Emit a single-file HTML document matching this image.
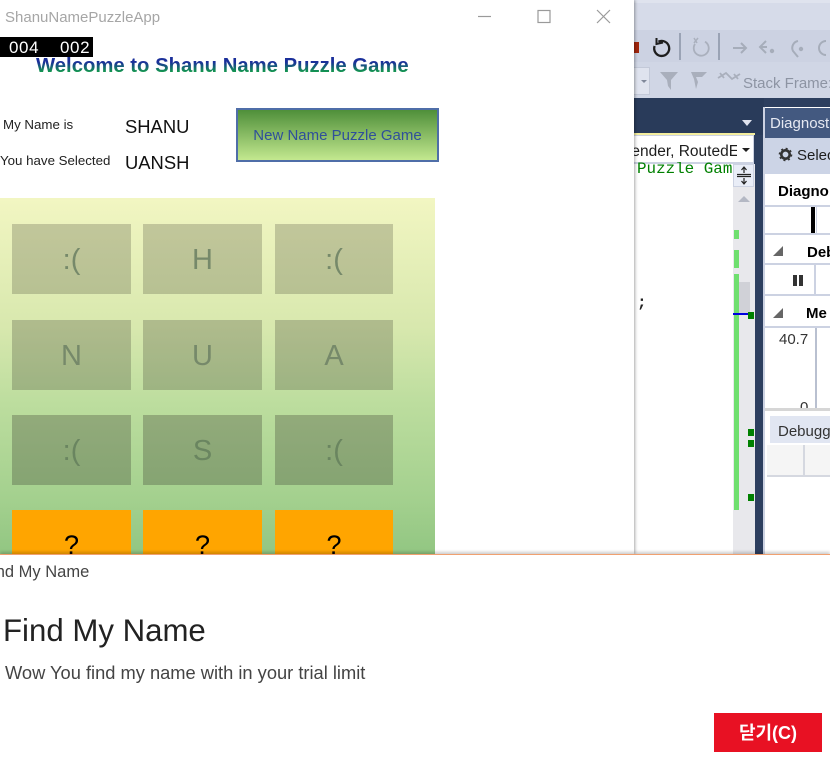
<!DOCTYPE html>
<html><head><meta charset="utf-8">
<style>
html,body{margin:0;padding:0;background:#fff}
#r{position:relative;width:830px;height:768px;overflow:hidden;background:#fff;font-family:"Liberation Sans","Noto Sans CJK KR",sans-serif}
.a{position:absolute}
.t{position:absolute;white-space:nowrap;line-height:1}
.tile{position:absolute;width:119px;height:70px}
.r1{background:rgba(50,50,40,.23)}
.r2{background:rgba(50,50,40,.25)}
.r3{background:rgba(50,50,40,.29)}
.tile span,.q span{position:absolute;left:0;right:0;text-align:center;line-height:1}
.tile span{top:22px;font-size:29px;color:#76896a}
.r3 span{color:#6a8560}
.q{position:absolute;width:119px;height:70px;background:#ffa500;top:510px}
.q span{top:22px;font-size:27px;color:#000}
</style></head><body>
<div id="r">
<!-- IDE background -->
<div class="a" style="left:634px;top:0;width:196px;height:554px;background:#fff"></div>
<div class="a" style="left:634px;top:0;width:196px;height:98px;background:#d6dbe9"></div>
<div class="a" style="left:634px;top:0;width:196px;height:3px;background:#dfe3ee"></div>
<div class="a" style="left:634px;top:30px;width:196px;height:32px;background:#ccd2e2"></div>
<div class="a" style="left:634px;top:62px;width:196px;height:36px;background:#d0d6e5"></div>
<div class="a" style="left:634px;top:42px;width:5px;height:11px;background:#a1260d"></div>
<div class="a" style="left:679px;top:33px;width:2px;height:27px;background:#9aa3b5"></div>
<div class="a" style="left:718px;top:33px;width:2px;height:27px;background:#9aa3b5"></div>
<svg class="a" style="left:634px;top:30px" width="196" height="64" viewBox="0 0 196 64" fill="none">
<path d="M24.4 11.7 A7.5 7.5 0 1 1 20.6 16" stroke="#1e1e1e" stroke-width="2.3"/>
<path d="M22.5 8 L22.5 14 L29 12.5" stroke="#1e1e1e" stroke-width="2"/>
<path d="M71 11.7 A7.5 7.5 0 1 1 61 14" stroke="#aab0bd" stroke-width="1.8"/>
<path d="M60 8 L63 13 M64 8 L60 13" stroke="#aab0bd" stroke-width="1.5"/>
<path d="M99 18 H112 M107 13 L112 18 L107 23" stroke="#a6adba" stroke-width="2"/>
<path d="M132 11 L126 17 L132 23 M127 17 H133" stroke="#a6adba" stroke-width="2"/>
<circle cx="138" cy="21" r="2.2" fill="#a6adba"/>
<path d="M164 11 A7 7 0 0 0 159 21 L164 27" stroke="#a6adba" stroke-width="2"/>
<circle cx="167" cy="19" r="2.2" fill="#a6adba"/>
<path d="M192 11 A7 7 0 0 0 192 25" stroke="#a6adba" stroke-width="2"/>
<path d="M26 42 L44 42 L37 50 L37 60 L34 56 L33 50 Z" fill="#a9afbc"/>
<path d="M57 42 H73 L68 47 H62 L64 52 L62 59 L60 49 Z" fill="#a9afbc"/>
<path d="M84 48 L92 43 L98 49 L106 44 M86 43 L90 48 M100 44 L104 49" stroke="#a9afbc" stroke-width="1.8"/>
</svg>
<div class="a" style="left:634px;top:67px;width:16px;height:28px;background:#dfe3ee;border:1px solid #c3c9d8;border-left:0;box-sizing:border-box"></div>
<div class="a" style="left:641px;top:80px;border-left:3px solid transparent;border-right:3px solid transparent;border-top:3px solid #80889a"></div>
<div class="t" style="left:743px;top:76px;font-size:15px;color:#8d94a3">Stack Frame:</div>
<!-- Dark band -->
<div class="a" style="left:634px;top:98px;width:196px;height:456px;background:#2d3f5f"></div>
<div class="a" style="left:634px;top:98px;width:130px;height:37px;background:#293b5a"></div>
<div class="a" style="left:742px;top:120px;border-left:5px solid transparent;border-right:5px solid transparent;border-top:6px solid #dfe3ee"></div>
<!-- code pane -->
<div class="a" style="left:634px;top:133px;width:99px;height:421px;background:#fff"></div>
<div class="a" style="left:634px;top:133px;width:121px;height:2px;background:#f4ee9e"></div>
<div class="a" style="left:634px;top:135px;width:120px;height:29px;background:#ccd2e2"></div>
<div class="a" style="left:634px;top:136px;width:119px;height:26px;background:#fff"></div>
<div class="t" style="left:634px;top:144px;width:103px;overflow:hidden;font-size:15.5px;color:#1e1e1e;text-indent:-13px">Sender, RoutedE</div>
<div class="a" style="left:742px;top:148px;border-left:4px solid transparent;border-right:4px solid transparent;border-top:4px solid #1e1e1e"></div>
<div class="t" style="left:637px;top:162px;width:96px;overflow:hidden;font-family:'Liberation Mono',monospace;font-size:15.9px;color:#008000">Puzzle Gam</div>
<div class="t" style="left:637px;top:295px;font-family:'Liberation Mono',monospace;font-weight:bold;font-size:16px;color:#222">;</div>
<!-- scrollbar -->
<div class="a" style="left:733px;top:164px;width:22px;height:390px;background:#e8e8ec"></div>
<div class="a" style="left:733px;top:164px;width:21px;height:23px;background:#e9edf7;border:1px solid #ccd2e2;box-sizing:border-box"></div>
<svg class="a" style="left:735px;top:166px" width="18" height="19" fill="none" stroke="#222" stroke-width="1.2"><path d="M2 8.5H16M2 10.5H16M9 1V7M9 12V18M6.5 4L9 1L11.5 4M6.5 15L9 18L11.5 15"/></svg>
<div class="a" style="left:738px;top:196px;border-left:6px solid transparent;border-right:6px solid transparent;border-bottom:6px solid #b4b8c4"></div>
<div class="a" style="left:739px;top:282px;width:11px;height:32px;background:#d0d1d7"></div>
<div class="a" style="left:734px;top:230px;width:5px;height:9px;background:#6fdf6f"></div>
<div class="a" style="left:734px;top:250px;width:5px;height:18px;background:#6fdf6f"></div>
<div class="a" style="left:734px;top:274px;width:5px;height:236px;background:#6fdf6f"></div>
<div class="a" style="left:733px;top:313px;width:16px;height:2px;background:#0000e0"></div>
<div class="a" style="left:748px;top:312px;width:6px;height:7px;background:#008000"></div>
<div class="a" style="left:748px;top:429px;width:6px;height:7px;background:#008000"></div>
<div class="a" style="left:748px;top:440px;width:6px;height:7px;background:#008000"></div>
<div class="a" style="left:748px;top:494px;width:6px;height:7px;background:#008000"></div>
<!-- diagnostic pane -->
<div class="a" style="left:763px;top:107px;width:67px;height:447px;background:#fff;border-left:2px solid #ccd2e2;box-sizing:border-box"></div>
<div class="a" style="left:765px;top:108px;width:65px;height:30px;background:#435980"></div>
<div class="t" style="left:770px;top:116px;font-size:15px;color:#e6e9f2">Diagnost</div>
<div class="a" style="left:765px;top:138px;width:65px;height:36px;background:#ccd4e6"></div>
<svg class="a" style="left:778px;top:147px" width="15" height="15"><circle cx="7.5" cy="7.5" r="4.2" fill="none" stroke="#333" stroke-width="2.6"/><circle cx="7.5" cy="7.5" r="6" fill="none" stroke="#333" stroke-width="1.6" stroke-dasharray="2 2.7"/></svg>
<div class="t" style="left:797px;top:148px;font-size:15px;color:#1e1e1e">Selec</div>
<div class="t" style="left:778px;top:184px;font-size:15px;font-weight:bold;color:#000">Diagno</div>
<div class="a" style="left:765px;top:205px;width:65px;height:2px;background:#ccd2e2"></div>
<div class="a" style="left:811px;top:207px;width:4px;height:26px;background:#000"></div>
<div class="a" style="left:816px;top:207px;width:1px;height:26px;background:#ccd2e2"></div>
<div class="a" style="left:765px;top:233px;width:65px;height:2px;background:#ccd2e2"></div>
<div class="a" style="left:773px;top:246px;border-left:10px solid transparent;border-bottom:10px solid #666"></div>
<div class="t" style="left:807px;top:245px;font-size:15px;font-weight:bold;color:#000">Deb</div>
<div class="a" style="left:765px;top:263px;width:65px;height:2px;background:#ccd2e2"></div>
<div class="a" style="left:814px;top:265px;width:2px;height:30px;background:#ccd2e2"></div>
<div class="a" style="left:793px;top:275px;width:4px;height:11px;background:#333"></div>
<div class="a" style="left:799px;top:275px;width:4px;height:11px;background:#333"></div>
<div class="a" style="left:765px;top:294px;width:65px;height:2px;background:#ccd2e2"></div>
<div class="a" style="left:773px;top:308px;border-left:10px solid transparent;border-bottom:10px solid #666"></div>
<div class="t" style="left:806px;top:306px;font-size:15px;font-weight:bold;color:#000">Me</div>
<div class="a" style="left:765px;top:326px;width:65px;height:2px;background:#ccd2e2"></div>
<div class="a" style="left:815px;top:328px;width:2px;height:80px;background:#b9c0d0"></div>
<div class="t" style="left:779px;top:332px;font-size:15px;color:#333">40.7</div>
<div class="a" style="left:765px;top:400px;width:50px;height:8px;overflow:hidden"><div class="t" style="left:35px;top:0;font-size:15px;color:#333">0</div></div>
<div class="a" style="left:765px;top:408px;width:65px;height:3px;background:#d6d6d6"></div>
<div class="a" style="left:770px;top:416px;width:60px;height:27px;background:#e1e6f2"></div>
<div class="t" style="left:778px;top:424px;font-size:15px;color:#333">Debugg</div>
<div class="a" style="left:767px;top:445px;width:63px;height:32px;background:#f5f5f5;border-bottom:2px solid #d5d8e0;box-sizing:border-box"></div>
<div class="a" style="left:803px;top:445px;width:2px;height:32px;background:#d5d8e0"></div>
<!-- app window -->
<div class="a" style="left:0;top:0;width:634px;height:554px;background:#fff;box-shadow:1px 0 3px rgba(0,0,0,.35)"></div>
<div class="t" style="left:5px;top:10px;font-size:15px;color:#a6a6a6">ShanuNamePuzzleApp</div>
<svg class="a" style="left:470px;top:5px" width="145" height="24" fill="none" stroke="#9a9a9a" stroke-width="1.2"><path d="M8 11.5H21"/><rect x="68" y="5.5" width="12" height="12"/><path d="M127 5L140 18M140 5L127 18"/></svg>
<div class="a" style="left:0;top:37px;width:93px;height:20px;background:#000"></div>
<div class="t" style="left:9px;top:39px;font-size:17px;color:#fff;letter-spacing:.6px">004</div>
<div class="t" style="left:60px;top:39px;font-size:17px;color:#fff;letter-spacing:.6px">002</div>
<div class="t" style="left:36px;top:55px;height:24px;line-height:23px;font-size:20.3px;font-weight:bold;background:linear-gradient(#1a2f9a 30%,#12a544 75%);-webkit-background-clip:text;background-clip:text;color:transparent">Welcome to Shanu Name Puzzle Game</div>
<div class="t" style="left:3px;top:118px;font-size:13.3px;color:#222">My Name is</div>
<div class="t" style="left:0;top:154px;font-size:13.3px;color:#222">You have Selected</div>
<div class="t" style="left:125px;top:118px;font-size:18.4px;color:#111">SHANU</div>
<div class="t" style="left:125px;top:154px;font-size:18.4px;color:#111">UANSH</div>
<div class="a" style="left:236px;top:108px;width:203px;height:54px;box-sizing:border-box;border:2.5px solid #4f6ea8;background:linear-gradient(#4f8f3a,#c3e88f)"></div>
<div class="t" style="left:236px;top:128px;width:203px;text-align:center;font-size:15px;color:#2f4f9a">New Name Puzzle Game</div>
<!-- panel -->
<div class="a" style="left:0;top:198px;width:435px;height:356px;background:linear-gradient(#f2f6c2 0%,#d8e8ae 36%,#bcdd9e 58%,#a3d08e 85%,#92c682 100%)"></div>
<div class="tile r1" style="left:12px;top:224px"><span>:(</span></div>
<div class="tile r1" style="left:143px;top:224px"><span>H</span></div>
<div class="tile r1" style="left:275px;top:224px;width:118px"><span>:(</span></div>
<div class="tile r2" style="left:12px;top:320px"><span>N</span></div>
<div class="tile r2" style="left:143px;top:320px"><span>U</span></div>
<div class="tile r2" style="left:275px;top:320px;width:118px"><span>A</span></div>
<div class="tile r3" style="left:12px;top:415px"><span>:(</span></div>
<div class="tile r3" style="left:143px;top:415px"><span>S</span></div>
<div class="tile r3" style="left:275px;top:415px;width:118px"><span>:(</span></div>
<div class="q" style="left:12px"><span>?</span></div>
<div class="q" style="left:143px"><span>?</span></div>
<div class="q" style="left:275px;width:118px"><span>?</span></div>
<!-- dialog -->
<div class="a" style="left:0;top:554px;width:830px;height:214px;background:#fff;border-top:1px solid #f0a070;box-sizing:border-box;box-shadow:0 -2px 3px rgba(0,0,0,.2)"></div>
<div class="t" style="left:-18px;top:564px;font-size:16.5px;color:#444">Find My Name</div>
<div class="t" style="left:3px;top:615px;font-size:31.2px;color:#222">Find My Name</div>
<div class="t" style="left:5px;top:664px;font-size:18.3px;color:#444">Wow You find my name with in your trial limit</div>
<div class="a" style="left:714px;top:713px;width:108px;height:39px;background:#e81123"></div>
<div class="t" style="left:714px;top:724px;width:108px;text-align:center;font-size:18px;font-weight:bold;color:#fff">닫기(C)</div>
</div>
</body></html>
